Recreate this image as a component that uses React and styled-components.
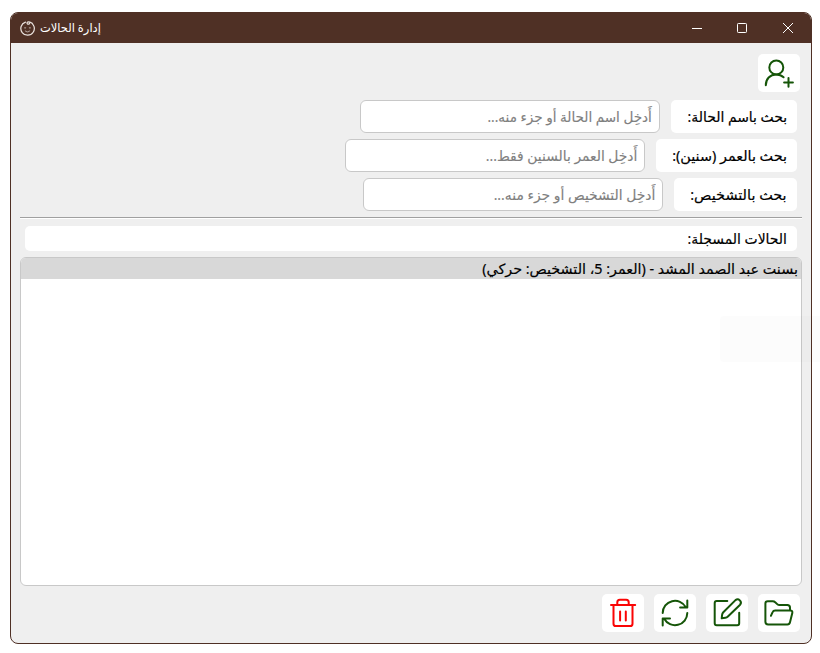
import React from "react";
import styled, { createGlobalStyle } from "styled-components";

const GlobalStyle = createGlobalStyle`
  *, *::before, *::after { box-sizing: border-box; }
  body {
    margin: 0;
    background: #fff;
    overflow: hidden;
    font-family: "Noto Sans", "DejaVu Sans", sans-serif;
  }
`;

const Desktop = styled.div`
  position: relative;
  width: 820px;
  height: 653px;
  padding: 12px 8px 9px 10px;
  overflow: hidden;
`;

const Window = styled.main`
  display: flex;
  flex-direction: column;
  height: 632px;
  width: 802px;
  border: 1px solid #4f3025;
  border-radius: 8px;
  background: #efefef;
  overflow: hidden;
`;

const TitleBar = styled.header`
  display: flex;
  align-items: center;
  flex: none;
  height: 30px;
  padding-left: 9px;
  background: #4f3025;
  color: #fff;
`;

const Title = styled.h1`
  display: flex;
  flex: 1;
  margin: 0 0 0 5px;
  font-size: 12px;
  line-height: 20px;
  font-weight: 400;
`;

const Controls = styled.div`
  display: flex;
  margin-right: 1px;
`;

const ControlButton = styled.button`
  display: grid;
  place-items: center;
  width: 45px;
  height: 30px;
  padding: 0;
  border: 0;
  background: none;
  color: #fff;
  svg { display: block; }
`;

const Content = styled.div`
  display: flex;
  flex-direction: column;
  flex: 1;
  padding: 11px 9px;
`;

const Toolbar = styled.div`
  display: flex;
  justify-content: flex-end;
  gap: 10px;
  padding-right: 2px;
  margin-bottom: ${(p) => p.$below || 0}px;
`;

const IconButton = styled.button`
  width: 42px;
  height: 38px;
  padding: 0;
  border: 0;
  border-radius: 5px;
  background: #fff;
  color: ${(p) => (p.$danger ? "#fa0505" : "#155508")};
  svg { display: block; }
`;

const Filters = styled.div`
  display: flex;
  flex-direction: column;
  gap: 6px;
  padding-right: 5px;
`;

const FilterRow = styled.label`
  display: flex;
  gap: 11px;
  height: 33px;
`;

const FilterName = styled.span`
  display: flex;
  align-items: center;
  width: ${(p) => p.$width}px;
  padding-right: 10px;
  border-radius: 5px;
  background: #fff;
  color: #000;
  font-size: 14px;
`;

const Field = styled.span`
  display: flex;
  align-items: center;
  width: 300px;
  padding-right: 7px;
  border: 1px solid #c8c8c8;
  border-radius: 6px;
  background: #fff;
  color: #7f7f7f;
  font-size: 14px;
`;

const Text = styled.span`
  display: block;
  flex: none;
  white-space: nowrap;
  transform: scaleX(${(p) => p.$stretch || 1});
  transform-origin: ${(p) => p.$origin || "right"} center;
  -webkit-text-stroke: ${(p) => p.$weight || 0}px currentColor;
`;

const Divider = styled.hr`
  width: 100%;
  height: 2px;
  margin: 6px 0 7px;
  border: 0;
  border-top: 1px solid #a0a0a0;
  background: #fff;
`;

const Heading = styled.h2`
  display: flex;
  align-items: center;
  height: 25px;
  margin: 0 5px 6px;
  padding-right: 10px;
  border-radius: 5px;
  background: #fff;
  font-size: 14px;
  font-weight: 400;
`;

const List = styled.ul`
  height: 329px;
  margin: 0 0 8px;
  padding: 0;
  border: 1px solid #c8c8c8;
  border-radius: 6px;
  background: #fff;
  list-style: none;
  overflow: hidden;
`;

const ListRow = styled.li`
  display: flex;
  align-items: center;
  height: 21px;
  padding-right: 3px;
  background: #d8d8d8;
  font-size: 14px;
`;

const Shade = styled.div`
  position: absolute;
  left: 720px;
  top: 316px;
  width: 100px;
  height: 46px;
  border-radius: 3px 0 0 3px;
  background: rgba(0, 0, 0, 0.01);
  pointer-events: none;
`;

const Glyph = ({ children }) => (
  <svg width="42" height="38" viewBox="0 0 42 38" fill="none" stroke="currentColor" strokeWidth="2" strokeLinecap="round" strokeLinejoin="round">
    {children}
  </svg>
);

const FaceIcon = () => (
  <svg width="15" height="15" viewBox="0 0 14 14" fill="none" stroke="#e9e1dd" strokeWidth="1.15" strokeLinecap="round">
    <path d="M5.1 1A6.3 6.3 0 1 0 8.7.9C6.8.2 5.8 2.2 7.3 2.9c.9.4 1.8-.2 1.5-1" />
    <path d="M4.3 6.4h1M8.7 6.4h1M5 9.3c1 1.2 3 1.2 4 0" strokeWidth="1" opacity=".6" />
  </svg>
);

const filters = [
  { name: "بحث باسم الحالة:", hint: "أَدخِل اسم الحالة أو جزء منه...", width: 126, nameFit: 0.995, hintFit: 0.968 },
  { name: "بحث بالعمر (سنين):", hint: "أَدخِل العمر بالسنين فقط...", width: 141, nameFit: 1.025, hintFit: 0.988 },
  { name: "بحث بالتشخيص:", hint: "أَدخِل التشخيص أو جزء منه...", width: 123, nameFit: 1.03, hintFit: 0.99 },
];

export default function App() {
  return (
    <>
      <GlobalStyle />
      <Desktop>
        <Window>
          <TitleBar>
            <FaceIcon />
            <Title><Text dir="rtl" $origin="left" $stretch={0.955}>إدارة الحالات</Text></Title>
            <Controls>
              <ControlButton aria-label="تصغير">
                <svg width="11" height="10" stroke="currentColor"><path d="M0 5.5h10" /></svg>
              </ControlButton>
              <ControlButton aria-label="تكبير">
                <svg width="11" height="10" fill="none" stroke="currentColor"><rect x=".5" y=".5" width="9" height="9" rx=".8" /></svg>
              </ControlButton>
              <ControlButton aria-label="إغلاق">
                <svg width="11" height="10" stroke="currentColor"><path d="M1 0l10 10M11 0L1 10" /></svg>
              </ControlButton>
            </Controls>
          </TitleBar>
          <Content>
            <Toolbar $below={8}>
              <IconButton aria-label="إضافة حالة">
                <Glyph>
                  <circle cx="18.3" cy="13.4" r="7" />
                  <path d="M7.8 31.3C7.8 25 12 20.5 18.2 20.5c3 0 5.5 1 7.4 2.8M30.5 24v8.8M26.1 28.4h8.8" />
                </Glyph>
              </IconButton>
            </Toolbar>
            <Filters dir="rtl">
              {filters.map((f) => (
                <FilterRow key={f.name}>
                  <FilterName $width={f.width}><Text $stretch={f.nameFit} $weight={0.18}>{f.name}</Text></FilterName>
                  <Field><Text $stretch={f.hintFit} $weight={0.15}>{f.hint}</Text></Field>
                </FilterRow>
              ))}
            </Filters>
            <Divider />
            <Heading dir="rtl"><Text $stretch={0.995} $weight={0.18}>الحالات المسجلة:</Text></Heading>
            <List dir="rtl">
              <ListRow><Text $stretch={1.022} $weight={0.18}>بسنت عبد الصمد المشد - (العمر: 5، التشخيص: حركي)</Text></ListRow>
            </List>
            <Toolbar>
              <IconButton $danger aria-label="حذف">
                <Glyph>
                  <path d="M9 11h24.2M15.3 10.6V8.2c0-1.6.9-2.5 2.5-2.5h6.4c1.6 0 2.5.9 2.5 2.5v2.4M11.5 11.3v18.4c0 1.5.9 2.4 2.4 2.4h14.2c1.5 0 2.4-.9 2.4-2.4V11.3M18.1 17.5v9M23.8 17.5v9" />
                </Glyph>
              </IconButton>
              <IconButton aria-label="تحديث">
                <Glyph>
                  <path d="M8.7 19A12.3 12.3 0 0 1 31.8 13.2M33.3 6.5v7h-7.2M33.3 19A12.3 12.3 0 0 1 10.2 24.8M16 24.4H8.7v7" />
                </Glyph>
              </IconButton>
              <IconButton aria-label="تعديل">
                <Glyph>
                  <path d="M21.3 7.1H10.7c-1.2 0-2 .8-2 2v20.2c0 1.2.8 2 2 2h20.5c1.2 0 2-.8 2-2V18.8" />
                  <path d="M15.7 24.3l.4-3.5c.1-1 .5-1.8 1.2-2.5L29.5 6.1c3-2.4 7 1.6 4.6 4.6L21.9 22.5c-.7.7-1.5 1.1-2.5 1.2z" />
                </Glyph>
              </IconButton>
              <IconButton aria-label="فتح">
                <Glyph>
                  <path d="M32 16.2v-2.4c0-1.7-1-2.7-2.7-2.7h-7.6c-1 0-1.8-.3-2.5-1l-2-1.9c-.7-.7-1.5-1-2.5-1H9.8C8.2 7.2 7.4 8 7.4 9.5v18.2c0 1.7 1 2.7 2.7 2.7h19.3c1.4 0 2.3-.7 2.6-2.1l2.3-9.4c.4-1.5-.4-2.5-2-2.5H17.2c-1.3 0-2.1.5-2.6 1.7l-1.7 3.7" />
                </Glyph>
              </IconButton>
            </Toolbar>
          </Content>
        </Window>
        <Shade />
      </Desktop>
    </>
  );
}
